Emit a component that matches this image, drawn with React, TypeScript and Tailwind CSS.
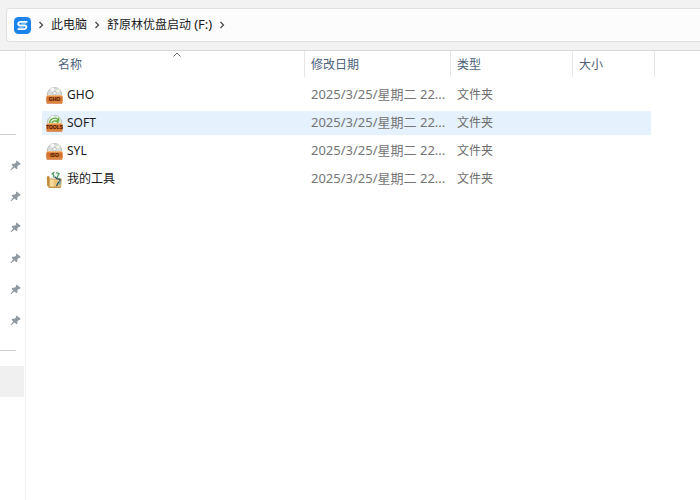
function Chevron() {
  return (
    <svg viewBox="0 0 6 8" className="h-2 w-1.5" fill="none" stroke="#444" strokeWidth="1.2" aria-hidden="true">
      <path d="M1.5 1 4.5 4 1.5 7" />
    </svg>
  );
}

function PinIcon() {
  return (
    <svg viewBox="0 0 12 12" className="size-[11px] fill-[#919aa1]" aria-hidden="true">
      <path d="M7.2.6 11.6 4.2 10.7 5.4 9.7 5.3 8 7.2 8.1 9.4 7.1 10.1 4.9 8.3 1.2 11.3.5 10.7 3.5 7.1 1.7 5.2 2.5 4.2 4.8 4.2 6.7 2.6 6.4 1.5Z" />
    </svg>
  );
}

function DriveLogo() {
  return (
    <svg viewBox="0 0 17 17" className="h-[17px] w-[17px]" aria-hidden="true">
      <rect width="17" height="17" rx="4.5" fill="#1b84ea" />
      <path
        d="M13.4 4.8H7.2C5.3 4.8 4.3 5.6 4.2 6.8c-.1 1.1.7 1.7 2 1.7h4.5c1.2 0 1.8.5 1.7 1.5-.1 1.4-1 2.2-2.8 2.2H3.6"
        fill="none"
        stroke="#fff"
        strokeWidth="1.8"
      />
      <path d="M7.4 6.7h4.8M4.6 10.3h5" stroke="#b9dcff" strokeWidth=".7" />
    </svg>
  );
}

function DiscIcon({ label, green = false }: { label: string; green?: boolean }) {
  return (
    <svg viewBox="0 0 17 17" className="h-[17px] w-[17px] shrink-0" aria-hidden="true">
      <circle cx="8.5" cy="7.7" r="7.2" fill={green ? "#e3ebdc" : "#d9dddc"} stroke="#a3abaa" strokeWidth=".7" />
      <path d="M8.5 7.5 4.2 1.9A7 7 0 0 1 7.8.6Z" fill="#fbfcfb" />
      <path d="M8.5 7.5 11.6 1.2A7 7 0 0 1 14.6 4Z" fill="#eef3df" />
      {green ? (
        <path
          d="M3.6 8a5 5 0 0 1 8.6-3.3M6 8.4a2.8 2.8 0 0 1 4.4-2M12.6 2.6v3.2H9.5M10.5 6.3l2 2"
          fill="none"
          stroke="#5fab3d"
          strokeWidth="1.3"
        />
      ) : (
        <circle cx="8.5" cy="6.2" r="1.8" fill="#fff" stroke="#aab0af" strokeWidth=".8" />
      )}
      <path d="M1.6 8h13.8l1.2 1.8v5.8c0 .6-.4 1-1 1H1.4c-.6 0-1-.4-1-1V9.8Z" fill="#e8924a" />
      <path d="M1.6 8h13.8l.8 1.2H.8Z" fill="#f3b777" />
      <rect x=".5" y="9.6" width="16" height="5" fill="#d4722f" />
      <path d="M.9 16.1h15.2" stroke="#c4652a" strokeWidth=".8" />
      <text
        x="8.5"
        y="14"
        textAnchor="middle"
        fill="#451a08"
        className="font-['Liberation_Sans',sans-serif] text-[5px] font-bold"
      >
        {label}
      </text>
    </svg>
  );
}

function ToolsIcon() {
  return (
    <svg viewBox="0 0 17 17" className="h-[17px] w-[17px] shrink-0" aria-hidden="true">
      <path d="M5.5 4 7.5 1.2l5 .6 1.6 2.6-.4 4.2H5.3Z" fill="#edf3ee" />
      <path d="M5.6 3.2 8.4 1M7 2.4l1.2 4.4M12.8 2.6 10.6 8M10.2 1.6l3.6 1.2" fill="none" stroke="#4f9a63" strokeWidth="1.2" />
      <path d="M.8 5.4 3 5l.6 1.6v9.6L1.2 15Z" fill="#c28d3a" />
      <path d="M3.4 7.6 8 8.2l7.4-.4-.7 8.6H3.4Z" fill="#e8c277" stroke="#c6923e" strokeWidth=".6" />
      <path d="M4.2 8.6 7.6 9v6.6H4.2Z" fill="#f5dc9c" />
      <path d="M9.2 5.6c.6 2 2.2 2.6 4.6 2.4 1 1.6-.4 2.6-1.6 3.8-.8.8-.6 2-1.8 3.2" fill="none" stroke="#2f5566" strokeWidth="1.3" />
      <path d="m13.2 10 2 .6-.8 2.6-1.8 1Z" fill="#6aa5b4" />
      <path d="M2.4 16.3h12" stroke="#a9752a" strokeWidth=".7" />
    </svg>
  );
}

const files = [
  { name: "GHO", icon: <DiscIcon label="GHO" /> },
  { name: "SOFT", icon: <DiscIcon label="TOOLS" green />, active: true },
  { name: "SYL", icon: <DiscIcon label="ISO" /> },
  { name: "我的工具", icon: <ToolsIcon /> },
];

const columns = ["名称", "修改日期", "类型", "大小"];
const pins = [1, 2, 3, 4, 5, 6];

export default function App() {
  return (
    <div className="flex min-h-screen flex-col overflow-x-hidden bg-white font-['Noto_Sans','Noto_Sans_CJK_SC',sans-serif] text-xs text-[#1a1a1a]">
      <header className="border-b border-[#d8d8d8] bg-[#f2f2f2] pt-2 pb-2 pl-1.5">
        <nav
          aria-label="路径"
          className="flex h-[34px] items-center rounded-l border border-r-0 border-[#e0e0e0] bg-[#fcfcfc] pl-[7px] whitespace-nowrap"
        >
          <DriveLogo />
          <span className="flex w-5 justify-center"><Chevron /></span>
          <a href="#computer">此电脑</a>
          <span className="flex w-5 justify-center"><Chevron /></span>
          <a href="#drive">
            舒原林优盘启动 <span className="text-[13px]">(F:)</span>
          </a>
          <span className="flex w-5 justify-center"><Chevron /></span>
        </nav>
      </header>

      <div className="flex flex-1">
        <aside className="w-[26px] shrink-0 border-r border-[#f0f0f0] pt-[83px]">
          <hr className="w-4 border-[#cfcfcf]" />
          <ul className="mt-[15px]">
            {pins.map((pin) => (
              <li key={pin} className="flex h-[31px] items-center pl-2.5">
                <button type="button" aria-label={`固定项 ${pin}`}>
                  <PinIcon />
                </button>
              </li>
            ))}
          </ul>
          <hr className="mt-3.5 w-4 border-[#cfcfcf]" />
          <div className="mt-[15px] mr-px h-[31px] bg-[#f0f0f0]" />
        </aside>

        <main className="min-w-0 flex-1 pl-4">
          <table className="w-[613px] table-fixed border-separate border-spacing-0 text-left">
            <colgroup>
              <col className="w-[263px]" />
              <col className="w-[146px]" />
              <col className="w-[122px]" />
              <col className="w-[82px]" />
            </colgroup>
            <thead>
              <tr>
                {columns.map((column, index) => (
                  <th key={column} className="p-0 pb-1 font-normal text-[#4c607a]">
                    <div
                      className={`relative flex h-[26px] items-center border-r border-[#e5e5e5] pt-0.5 ${index === 0 ? "pl-4" : "pl-1.5"}`}
                    >
                      {column}
                      {index === 0 && (
                        <svg
                          viewBox="0 0 8 5"
                          className="absolute top-px left-1/2 h-[5px] w-2"
                          fill="none"
                          stroke="#666"
                          aria-hidden="true"
                        >
                          <path d="M.5 4.5 4 1l3.5 3.5" />
                        </svg>
                      )}
                    </div>
                  </th>
                ))}
              </tr>
            </thead>
            <tbody className="[&_td]:h-7 [&_td]:border-y-2 [&_td]:border-transparent [&_td]:bg-clip-padding [&_td]:py-0">
              {files.map((file) => (
                <tr key={file.name} className={file.active ? "[&_td]:bg-[#e5f1fd]" : ""}>
                  <td className="pl-1">
                    <div className="flex items-center gap-1">
                      {file.icon}
                      <span>{file.name}</span>
                    </div>
                  </td>
                  <td className="truncate pl-1.5 text-[13px] text-[#757575]">2025/3/25/星期二 22...</td>
                  <td className="pl-1.5 text-[#6d6d6d]">文件夹</td>
                  <td className="border-r-4" />
                </tr>
              ))}
            </tbody>
          </table>
        </main>
      </div>
    </div>
  );
}
